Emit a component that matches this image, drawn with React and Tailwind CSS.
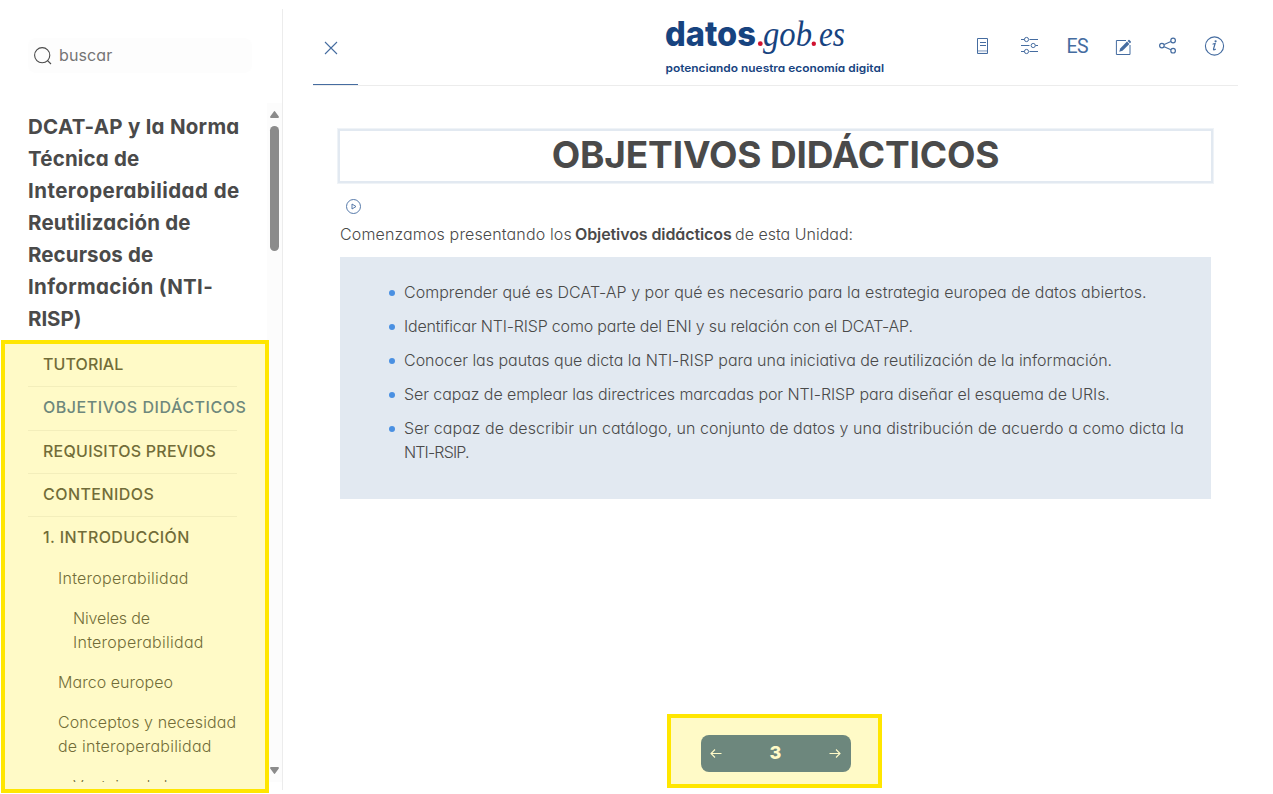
const titleLines = [
  ["DCAT-AP y la Norma", "tracking-[0.27px]"],
  ["Técnica de", "tracking-[0.18px]"],
  ["Interoperabilidad de", "tracking-[0.45px]"],
  ["Reutilización de", "tracking-[0.2px]"],
  ["Recursos de", "tracking-[0.1px]"],
  ["Información (NTI-", "tracking-[0.33px]"],
  ["RISP)", "tracking-[-0.05px]"],
];

const chapters = [
  ["TUTORIAL", "tracking-[0.1px] text-[#4a4a4a] pb-[2px]"],
  ["OBJETIVOS DIDÁCTICOS", "tracking-[0.54px] text-[#456ca0] pb-[2px]"],
  ["REQUISITOS PREVIOS", "tracking-[0.25px] text-[#4a4a4a] pb-[2px]"],
  ["CONTENIDOS", "tracking-[0.45px] text-[#4a4a4a] pb-[2px]"],
  ["1. INTRODUCCIÓN", "tracking-[0.4px] text-[#4a4a4a] pb-[4px]"],
];

const sections = [
  { indent: "pl-[30px]", lines: [["Interoperabilidad", "tracking-[0.26px]"]] },
  { indent: "pl-[45px]", lines: [["Niveles de", "tracking-[-0.15px]"], ["Interoperabilidad", "tracking-[0.26px]"]] },
  { indent: "pl-[30px]", lines: [["Marco europeo", "tracking-[0.05px]"]] },
  { indent: "pl-[30px]", lines: [["Conceptos y necesidad", "tracking-[0.08px]"], ["de interoperabilidad", "tracking-[0.22px]"]] },
  { indent: "pl-[45px]", lines: [["Ventajas de la", "tracking-[-0.15px]"]] },
];

const goals = [
  [["Comprender qué es DCAT-AP y por qué es necesario para la estrategia europea de datos abiertos.", "tracking-[0.035px]"]],
  [["Identificar NTI-RISP como parte del ENI y su relación con el DCAT-AP.", "tracking-[-0.19px]"]],
  [["Conocer las pautas que dicta la NTI-RISP para una iniciativa de reutilización de la información.", "tracking-[-0.015px]"]],
  [["Ser capaz de emplear las directrices marcadas por NTI-RISP para diseñar el esquema de URIs.", "tracking-[-0.08px]"]],
  [
    ["Ser capaz de describir un catálogo, un conjunto de datos y una distribución de acuerdo a como dicta la", "tracking-[0.045px]"],
    ["NTI-RSIP.", "tracking-[-0.85px]"],
  ],
];

function Sidebar() {
  return (
    <aside className="flex h-[781px] w-[283px] shrink-0 flex-col border-r border-[#ececec]">
      <div className="mt-[29px] ml-7 flex h-[35px] w-[224px] items-center rounded-lg bg-[#fdfdfd] pl-[5px]">
        <svg className="size-5 text-[#4a4a4a]" viewBox="0 0 20 20" fill="none" stroke="currentColor" strokeWidth="1.1">
          <circle cx="9.2" cy="9.2" r="7.6" />
          <path d="M14.3 14.3 18 18" />
        </svg>
        <span className="ml-1.5 pb-px text-[16px] tracking-[0.1px] text-[#757575]">buscar</span>
      </div>
      <div className="mt-[30px] flex h-[679px] overflow-hidden">
        <nav className="w-[267px] shrink-0 overflow-hidden pt-2 pl-7">
          <h2 className="text-[20.5px] leading-8 font-bold">
            {titleLines.map(([text, track]) => (
              <span key={text} className={`block whitespace-nowrap ${track}`}>{text}</span>
            ))}
          </h2>
          <ul className="pt-[9px] text-[16px] leading-[22px] font-medium">
            {chapters.map(([text, style], i) => (
              <li
                key={text}
                className={`flex h-[43.25px] w-[209px] items-center pl-[15px] whitespace-nowrap ${style} ${i < 4 ? "border-b border-black/6" : ""}`}
              >
                {text}
              </li>
            ))}
          </ul>
          <ul className="flex flex-col gap-4 pt-[6px] text-[16px] leading-6 font-light">
            {sections.map(({ indent, lines }, i) => (
              <li key={i} className={indent}>
                {lines.map(([text, track]) => (
                  <span key={text} className={`block whitespace-nowrap ${track}`}>{text}</span>
                ))}
              </li>
            ))}
          </ul>
        </nav>
        <div className="flex w-[15px] flex-col items-center bg-[#fcfcfc] pt-2 pb-2">
          <svg className="h-[7px] w-[9px]" viewBox="0 0 9 7" fill="#8b8b8b">
            <path d="M3.7.7Q4.5-.5 5.3.7L8.8 5.6Q9.2 7 8 7H1Q-.2 7 .2 5.6Z" />
          </svg>
          <div className="mt-2 h-[125px] w-[9px] rounded-full bg-[#8b8b8b]" />
          <svg className="mt-auto h-[7px] w-[9px]" viewBox="0 0 9 7" fill="#8b8b8b">
            <path d="M3.7 6.3Q4.5 7.5 5.3 6.3L8.8 1.4Q9.2 0 8 0H1Q-.2 0 .2 1.4Z" />
          </svg>
        </div>
      </div>
    </aside>
  );
}

function Logo() {
  return (
    <svg className="h-[66px] w-[222px] overflow-visible" viewBox="664 14 222 66" fill="#17437f">
      <text x="665" y="46" textLength="91" lengthAdjust="spacingAndGlyphs" className="font-['Inter',sans-serif] text-[34.5px] font-extrabold [font-feature-settings:normal]">datos</text>
      <circle cx="760.3" cy="43.7" r="2.4" fill="#d0112f" />
      <text x="763" y="46" textLength="49" lengthAdjust="spacingAndGlyphs" className="font-['Liberation_Serif',serif] text-[36px] italic">gob</text>
      <circle cx="813.8" cy="43.7" r="2.2" fill="#d0112f" />
      <text x="819" y="46" textLength="26" lengthAdjust="spacingAndGlyphs" className="font-['Liberation_Serif',serif] text-[36px] italic">es</text>
      <text x="665.5" y="72" textLength="218.5" lengthAdjust="spacingAndGlyphs" className="font-['Inter',sans-serif] text-[11px] font-semibold">potenciando nuestra economía digital</text>
    </svg>
  );
}

function Toolbar() {
  return (
    <div className="flex text-[#456ca0]">
      <svg className="h-8 w-[90px]" viewBox="970 30 90 32" fill="none" stroke="currentColor">
        <path d="M977.5 38.5h10v15h-10z" />
        <path d="M980 42.5h6M980 45.5h6" />
        <path d="M978 50.5h9M978 51.7h9" strokeOpacity=".4" />
        <path d="M1021 39.5h3.5M1029.5 39.5h8.5M1021 45.5h8.5M1035.5 45.5h2.5M1021 51.5h3.5M1029.5 51.5h8.5" strokeWidth="1.1" />
        <circle cx="1026.5" cy="39.5" r="2.1" />
        <circle cx="1033.2" cy="45.5" r="2.1" />
        <circle cx="1026.5" cy="51.5" r="2.1" />
      </svg>
      <span className="w-[38px] pt-px pl-[6.5px] font-['Roboto',sans-serif] text-[19.5px] leading-8 tracking-[-0.6px]">ES</span>
      <svg className="h-8 w-[140px]" viewBox="1098 30 140 32" fill="none" stroke="currentColor">
        <path d="M1126 40.5h-9.6v14h13.6v-9.5" />
        <path d="M1119.2 51.8l1-3.4 6.8-6.9 2.4 2.4-6.9 6.8z" fill="currentColor" stroke="none" />
        <path d="m1127.6 40.9.9-.9q.5-.3 1 .1l1.3 1.3q.4.5 0 1l-.9.9z" fill="currentColor" stroke="none" />
        <path d="m1164.2 44.5 6.7-3M1164.2 46.7l6.7 3" strokeWidth="1.1" />
        <circle cx="1161.9" cy="45.6" r="2.3" strokeWidth="1.2" />
        <circle cx="1173.1" cy="40.5" r="2.3" strokeWidth="1.2" />
        <circle cx="1173.1" cy="50.7" r="2.3" strokeWidth="1.2" />
        <circle cx="1214.5" cy="46" r="9.1" strokeWidth="1.1" />
        <path d="M1212.6 44.4q1-.9 2.5-.9l-1.6 5.6q-.1 1 .9.7.7-.3 1.2-1" strokeWidth="1.2" />
        <circle cx="1215.6" cy="41.3" r="1.1" fill="currentColor" stroke="none" />
      </svg>
    </div>
  );
}

function Main() {
  return (
    <main className="flex flex-1 flex-col">
      <header className="ml-[30px] flex h-[77px] w-[925px] border-b border-[#ececec]">
        <div className="h-[76px] w-[45px] border-b border-[#456ca0] pt-[32px] pl-[11px]">
          <svg className="size-[14px]" viewBox="0 0 14 14" stroke="#456ca0" strokeWidth="1.1">
            <path d="m1 1 12 12M13 1 1 13" />
          </svg>
        </div>
        <div className="ml-[306px] pt-[5px]"><Logo /></div>
        <div className="ml-[84px] pt-[21px]"><Toolbar /></div>
      </header>
      <section className="ml-[54px] flex w-[877px] flex-col pt-[42px]">
        <h1 className="m-px flex h-[54px] items-center justify-center border-2 border-[#e2e9f1] pb-[2px] text-[37px] font-bold tracking-[-0.15px] ring-1 ring-[#eff3f7]">
          OBJETIVOS DIDÁCTICOS
        </h1>
        <svg className="mt-[14px] ml-2 size-[17px]" viewBox="0 0 17 17" fill="none" stroke="#456ca0" strokeWidth=".9">
          <circle cx="8.5" cy="8.5" r="7" />
          <path d="M7 6v5l4-2.5z" />
        </svg>
        <p className="mt-[7px] ml-[3px] flex text-[16px] leading-6 font-light whitespace-pre">
          <span className="w-[235px] tracking-[0.14px]">Comenzamos presentando los </span>
          <strong className="w-[160px] font-semibold tracking-[-0.1px]">Objetivos didácticos</strong>
          <span className="tracking-[0px]">de esta Unidad:</span>
        </p>
        <ul className="mt-[11px] ml-[3px] flex h-[242px] w-[871px] flex-col gap-[10px] bg-[#e2e9f1] pt-[23px] pl-[48.5px] text-[16px] leading-6 font-light">
          {goals.map((lines, i) => (
            <li key={i} className="flex gap-[9.5px]">
              <span className="mt-[9.5px] size-[6px] shrink-0 rounded-full bg-[#4a90e2]" />
              <div>
                {lines.map(([text, track]) => (
                  <span key={text} className={`block whitespace-nowrap ${track}`}>{text}</span>
                ))}
              </div>
            </li>
          ))}
        </ul>
      </section>
      <div className="mt-[236px] ml-[418px] flex h-[37px] w-[150px] items-center justify-between rounded-lg bg-[#456ca0] pr-[9.5px] pl-[8.5px] text-white">
        <svg className="size-3" viewBox="0 .5 12 12" fill="none" stroke="currentColor" strokeWidth="1.1">
          <path d="M11.5 6H1M5 2 1 6l4 4" />
        </svg>
        <span className="pb-[3px] text-[18px] font-extrabold">3</span>
        <svg className="size-3" viewBox="0 .5 12 12" fill="none" stroke="currentColor" strokeWidth="1.1">
          <path d="M.5 6H11M7 2l4 4-4 4" />
        </svg>
      </div>
    </main>
  );
}

export default function App() {
  return (
    <div className="relative flex h-[794px] w-[1273px] overflow-hidden bg-white pt-[9px] font-['Inter',sans-serif] text-[#4a4a4a] [font-feature-settings:'cv11']">
      <Sidebar />
      <Main />
      <div className="absolute top-[340px] left-px h-[453px] w-[268px] border-4 border-[#ffe600] bg-[#ffe600]/22" />
      <div className="absolute top-[714px] left-[667px] h-[74px] w-[215px] border-4 border-[#ffe600] bg-[#ffe600]/22" />
    </div>
  );
}
